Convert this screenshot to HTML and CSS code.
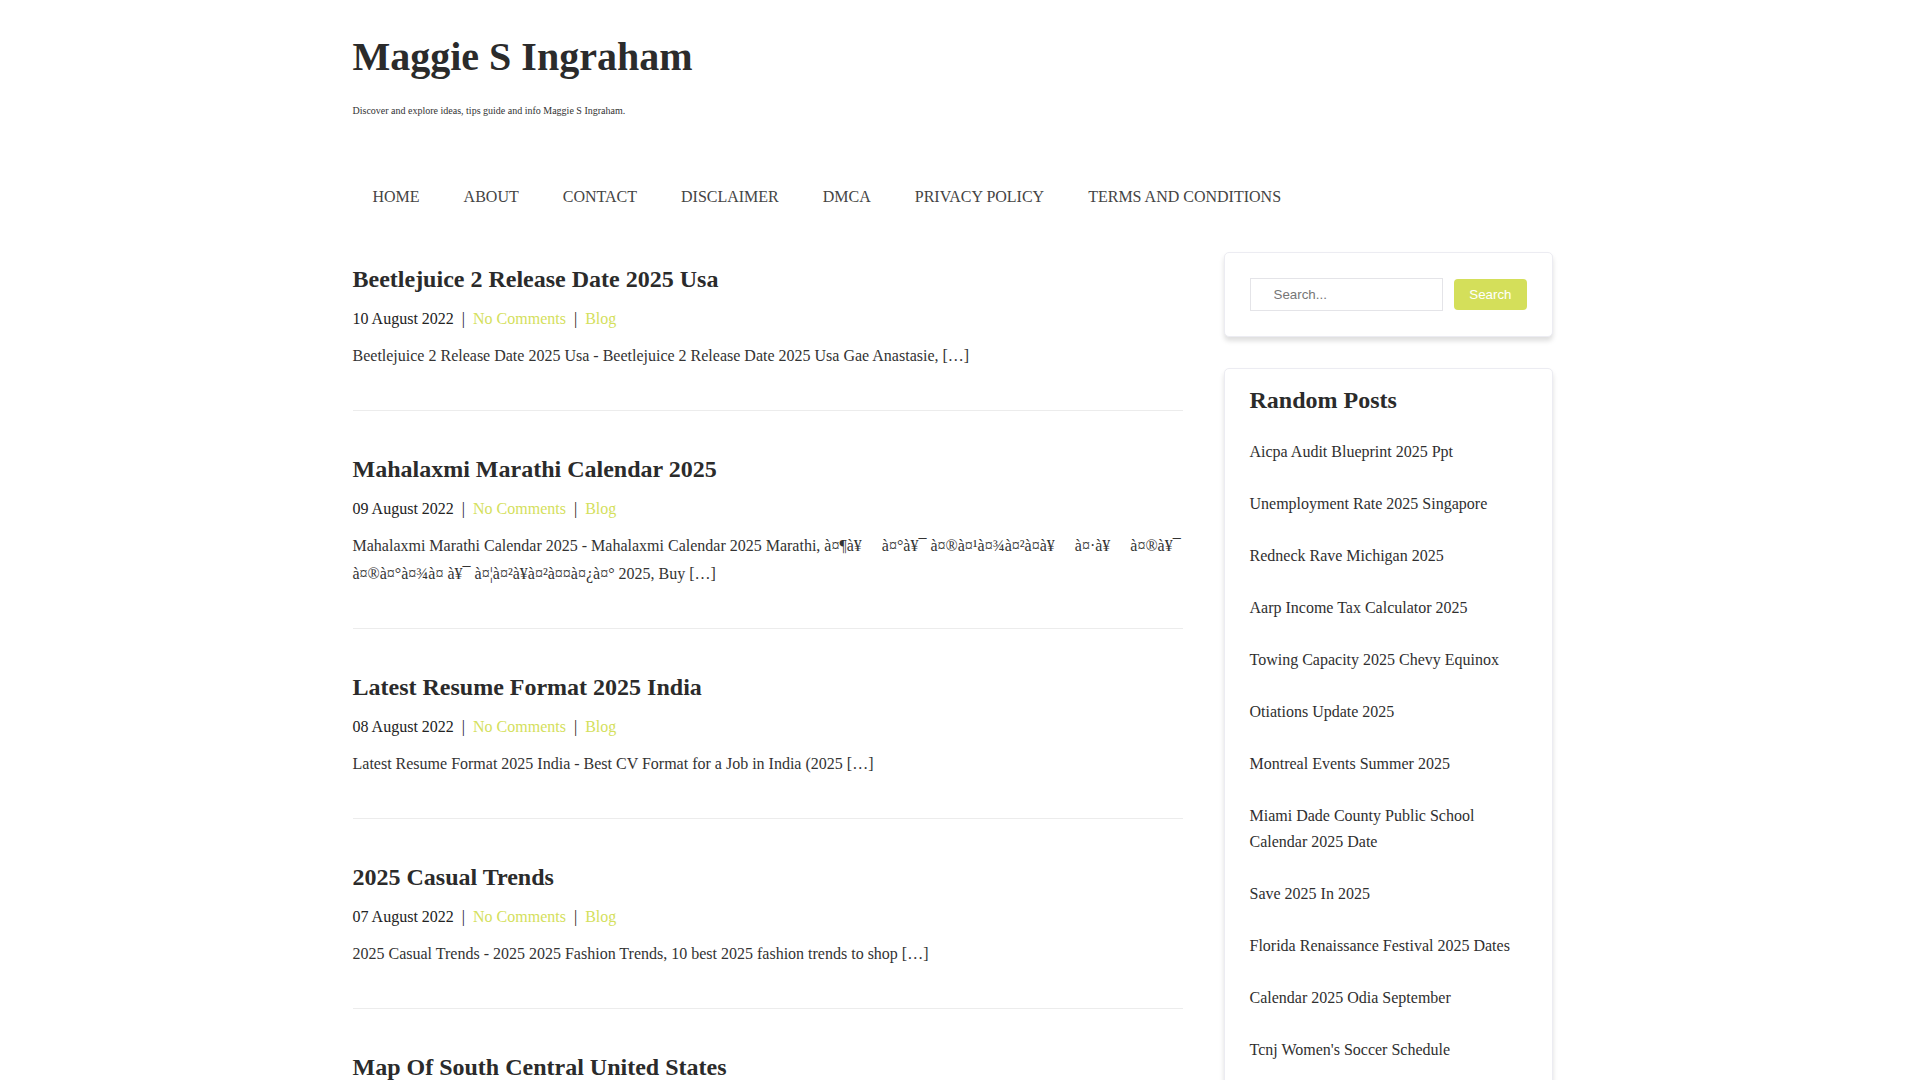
FILE: index.html
```html
<!DOCTYPE html>
<html lang="en">
<head>
<meta charset="utf-8">
<title>Maggie S Ingraham</title>
<link rel="stylesheet" href="styles.css">
</head>
<body>
<div class="container">
  <header class="site-header">
    <h1 class="site-title">Maggie S Ingraham</h1>
    <p class="tagline">Discover and explore ideas, tips guide and info Maggie S Ingraham.</p>
    <nav class="main-nav">
      <ul>
        <li><a href="#">HOME</a></li>
        <li><a href="#">ABOUT</a></li>
        <li><a href="#">CONTACT</a></li>
        <li><a href="#">DISCLAIMER</a></li>
        <li><a href="#">DMCA</a></li>
        <li><a href="#">PRIVACY POLICY</a></li>
        <li><a href="#">TERMS AND CONDITIONS</a></li>
      </ul>
    </nav>
  </header>

  <div class="layout">
    <main class="posts">
      <article class="post">
        <h2 class="post-title"><a href="#">Beetlejuice 2 Release Date 2025 Usa</a></h2>
        <div class="meta"><span class="date">10 August 2022</span><span class="sep">|</span><a href="#">No Comments</a><span class="sep">|</span><a href="#">Blog</a></div>
        <p class="excerpt">Beetlejuice 2 Release Date 2025 Usa - Beetlejuice 2 Release Date 2025 Usa Gae Anastasie, […]</p>
      </article>
      <article class="post">
        <h2 class="post-title"><a href="#">Mahalaxmi Marathi Calendar 2025</a></h2>
        <div class="meta"><span class="date">09 August 2022</span><span class="sep">|</span><a href="#">No Comments</a><span class="sep">|</span><a href="#">Blog</a></div>
        <p class="excerpt">Mahalaxmi Marathi Calendar 2025 - Mahalaxmi Calendar 2025 Marathi, à¤¶à¥&nbsp;&nbsp;&nbsp;&nbsp;&nbsp;à¤°à¥¯ à¤®à¤¹à¤¾à¤²à¤à¥&nbsp;&nbsp;&nbsp;&nbsp;&nbsp;à¤·à¥&nbsp;&nbsp;&nbsp;&nbsp;&nbsp;à¤®à¥¯ à¤®à¤°à¤¾à¤ à¥¯ à¤¦à¤²à¥à¤²à¤¤à¤¿à¤° 2025, Buy […]</p>
      </article>
      <article class="post">
        <h2 class="post-title"><a href="#">Latest Resume Format 2025 India</a></h2>
        <div class="meta"><span class="date">08 August 2022</span><span class="sep">|</span><a href="#">No Comments</a><span class="sep">|</span><a href="#">Blog</a></div>
        <p class="excerpt">Latest Resume Format 2025 India - Best CV Format for a Job in India (2025 […]</p>
      </article>
      <article class="post">
        <h2 class="post-title"><a href="#">2025 Casual Trends</a></h2>
        <div class="meta"><span class="date">07 August 2022</span><span class="sep">|</span><a href="#">No Comments</a><span class="sep">|</span><a href="#">Blog</a></div>
        <p class="excerpt">2025 Casual Trends - 2025 2025 Fashion Trends, 10 best 2025 fashion trends to shop […]</p>
      </article>
      <article class="post">
        <h2 class="post-title"><a href="#">Map Of South Central United States</a></h2>
        <div class="meta"><span class="date">06 August 2022</span><span class="sep">|</span><a href="#">No Comments</a><span class="sep">|</span><a href="#">Blog</a></div>
        <p class="excerpt">Map Of South Central United States - South Central United States Map, […]</p>
      </article>
    </main>

    <aside class="sidebar">
      <section class="widget search-widget">
        <form class="search-form">
          <input type="text" class="search-input" placeholder="Search...">
          <button type="button" class="search-btn">Search</button>
        </form>
      </section>
      <section class="widget list-widget">
        <h3 class="widget-title">Random Posts</h3>
        <ul class="widget-list">
          <li><a href="#">Aicpa Audit Blueprint 2025 Ppt</a></li>
          <li><a href="#">Unemployment Rate 2025 Singapore</a></li>
          <li><a href="#">Redneck Rave Michigan 2025</a></li>
          <li><a href="#">Aarp Income Tax Calculator 2025</a></li>
          <li><a href="#">Towing Capacity 2025 Chevy Equinox</a></li>
          <li><a href="#">Otiations Update 2025</a></li>
          <li><a href="#">Montreal Events Summer 2025</a></li>
          <li><a href="#">Miami Dade County Public School Calendar 2025 Date</a></li>
          <li><a href="#">Save 2025 In 2025</a></li>
          <li><a href="#">Florida Renaissance Festival 2025 Dates</a></li>
          <li><a href="#">Calendar 2025 Odia September</a></li>
          <li><a href="#">Tcnj Women's Soccer Schedule</a></li>
        </ul>
      </section>
    </aside>
  </div>
</div>
</body>
</html>
```

FILE: styles.css
```css
html, body {
  margin: 0;
  padding: 0;
  background: #ffffff;
}

body {
  font-family: "Liberation Serif", "Times New Roman", serif;
  color: #333333;
  font-size: 16px;
  padding-right: 15px;
}

a {
  text-decoration: none;
}

.container {
  width: 1200px;
  margin: 0 auto;
}

.site-header {
  padding-top: 33px;
}

.site-title {
  margin: 0;
  font-size: 40px;
  line-height: 48px;
  font-weight: bold;
  color: #2b2b2b;
}

.tagline {
  margin: 22px 0 0;
  font-size: 10px;
  line-height: 15px;
  color: #333333;
}

.main-nav {
  margin-top: 67px;
}

.main-nav ul {
  list-style: none;
  margin: 0;
  padding: 0;
  display: flex;
  gap: 4px;
}

.main-nav a {
  display: block;
  padding: 0 20px;
  font-size: 16px;
  line-height: 24px;
  color: #444444;
}

.layout {
  margin-top: 43px;
  display: grid;
  grid-template-columns: 830px minmax(0, 1fr);
  column-gap: 41px;
  align-items: start;
}

.posts {
  padding-top: 12px;
  min-width: 0;
}

.sidebar {
  min-width: 0;
}

.post {
  padding-bottom: 40px;
  border-bottom: 1px solid #ececec;
  margin-bottom: 43px;
}

.post-title {
  margin: 0 0 10px;
  font-size: 24px;
  line-height: 31px;
  font-weight: bold;
}

.post-title a {
  color: #2b2b2b;
}

.meta {
  font-size: 16px;
  line-height: 28px;
  color: #222222;
  margin-bottom: 9px;
}

.meta a {
  color: #d4e05c;
}

.meta .sep {
  margin: 0 8px;
  color: #222222;
}

.excerpt {
  margin: 0;
  font-size: 16px;
  line-height: 28px;
  color: #333333;
}

.widget {
  background: #ffffff;
  border: 1px solid #ececf2;
  border-radius: 5px;
  box-shadow: 0 4px 5px rgba(0, 0, 0, 0.13);
  margin-bottom: 31px;
}

.search-widget {
  padding: 25px;
}

.search-form {
  display: flex;
  gap: 11px;
  align-items: center;
}

.search-input {
  flex: 1 1 0;
  width: 0;
  min-width: 0;
  height: 33px;
  box-sizing: border-box;
  border: 1px solid #e4e4e8;
  border-radius: 0;
  padding: 0 0 0 23px;
  font-family: "Liberation Sans", Arial, sans-serif;
  font-size: 13.333px;
  color: #555555;
  outline: none;
}

.search-input::placeholder {
  color: #767676;
}

.search-btn {
  flex: none;
  height: 31px;
  padding: 0 15px;
  border: none;
  border-radius: 4px;
  background: #d4df5a;
  color: #ffffff;
  font-family: "Liberation Sans", Arial, sans-serif;
  font-size: 13.333px;
}

.list-widget {
  padding: 16px 25px 25px;
}

.widget-title {
  margin: 0;
  font-size: 24px;
  line-height: 31px;
  font-weight: bold;
  color: #2b2b2b;
}

.widget-list {
  list-style: none;
  margin: 10px 0 0;
  padding: 0;
}

.widget-list li {
  padding: 13px 0;
  font-size: 16px;
  line-height: 26px;
}

.widget-list a {
  color: #2f2f2f;
}
```
